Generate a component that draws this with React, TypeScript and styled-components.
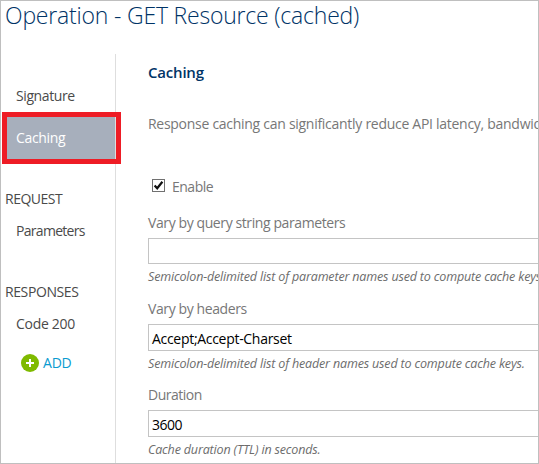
import React from 'react';
import styled, { createGlobalStyle } from 'styled-components';

const GlobalStyle = createGlobalStyle`
  * { box-sizing: border-box; }
  body { margin: 0; background: #fff; font-family: "Open Sans", "Noto Sans", sans-serif; }
`;

const Page = styled.div`
  width: 539px;
  height: 464px;
  border: 1px solid #bfbfbf;
  overflow: hidden;
  display: flex;
  flex-direction: column;
`;

const Title = styled.h1`
  margin: 0;
  height: 53px;
  padding: 0 0 0 4px;
  font-size: 23px;
  font-weight: 300;
  line-height: 28px;
  letter-spacing: -0.2px;
  color: #003366;
  white-space: nowrap;
`;

const Body = styled.div`
  flex: 1;
  display: flex;
  min-height: 0;
`;

const Sidebar = styled.nav`
  flex: none;
  width: 115px;
  border-right: 1px solid #dedede;
  padding-top: 22px;
  font-size: 14px;
  color: #4a4a4a;
`;

const NavItem = styled.div<{ $selected?: boolean; $track?: number }>`
  position: relative;
  height: ${p => (p.$selected ? 42 : 41)}px;
  margin-left: 1px;
  line-height: 20px;
  padding: ${p => (p.$selected ? 11 : 10)}px 0 0 14px;
  letter-spacing: ${p => p.$track ?? 0}px;
  color: ${p => (p.$selected ? '#fff' : 'inherit')};
  background: ${p => (p.$selected ? '#a7afbc' : 'transparent')};
`;

const Highlight = styled.span`
  position: absolute;
  left: 0;
  top: -5px;
  width: 119px;
  height: 52px;
  border: 5px solid #ee1c25;
`;

const NavHeading = styled.div<{ $gap: number; $track?: number }>`
  margin-top: ${p => p.$gap}px;
  height: 22px;
  padding-left: 4px;
  line-height: 20px;
  letter-spacing: ${p => p.$track ?? 0}px;
`;

const AddButton = styled.div`
  display: flex;
  align-items: center;
  gap: 4px;
  height: 20px;
  margin-top: 8px;
  padding-left: 20px;
  line-height: 20px;
  letter-spacing: -0.2px;
  color: #0a9bd0;
  svg { display: block; }
`;

const Content = styled.main`
  flex: 1;
  min-width: 0;
  padding: 8px 0 0 32px;
  overflow: hidden;
  white-space: nowrap;
  font-size: 14px;
  line-height: 20px;
  color: #777;
`;

const Heading = styled.h2`
  margin: 0 0 32px;
  font-size: 15px;
  font-weight: 600;
  line-height: 20px;
  letter-spacing: -0.2px;
  color: #003366;
`;

const Intro = styled.p`
  margin: 0 0 43px;
  letter-spacing: -0.28px;
`;

const CheckRow = styled.div`
  display: flex;
  height: 20px;
  gap: 7px;
  padding-left: 4px;
  margin-bottom: 16px;
  letter-spacing: -0.5px;
  svg { display: block; margin-top: 2px; }
`;

const Field = styled.div<{ $after: number }>`
  margin-bottom: ${p => p.$after}px;
`;

const Label = styled.div<{ $track: number }>`
  height: 20px;
  margin-bottom: 5px;
  letter-spacing: ${p => p.$track}px;
`;

const Input = styled.div<{ $height: number; $track?: number }>`
  height: ${p => p.$height}px;
  border: 1px solid #c4c4c4;
  border-right: 0;
  padding: 4px 0 0 3px;
  letter-spacing: ${p => p.$track ?? 0}px;
  color: #000;
`;

const Hint = styled.div`
  height: 20px;
  margin-top: 3px;
  font-size: 12.5px;
  font-style: italic;
  letter-spacing: -0.16px;
  color: #6c6c6c;
`;

const PlusIcon = () => (
  <svg width="18" height="18" viewBox="0 0 18 18">
    <circle cx="9" cy="9" r="9" fill="#7fba00" />
    <path d="M9 5v8M5 9h8" stroke="#fff" strokeWidth="2" />
  </svg>
);

const CheckIcon = () => (
  <svg width="13" height="13" viewBox="0 0 13 13">
    <rect x=".5" y=".5" width="12" height="12" fill="#fff" stroke="#707070" />
    <path d="M2.6 6.4 5.2 9.2 10.4 2.8" fill="none" stroke="#111" strokeWidth="2.2" />
  </svg>
);

export default function App() {
  return (
    <>
      <GlobalStyle />
      <Page>
        <Title>Operation - GET Resource (cached)</Title>
        <Body>
          <Sidebar>
            <NavItem $track={-0.4}>Signature</NavItem>
            <NavItem $selected $track={-0.35}>
              Caching
              <Highlight />
            </NavItem>
            <NavHeading $gap={30} $track={-0.5}>REQUEST</NavHeading>
            <NavItem $track={-0.7}>Parameters</NavItem>
            <NavHeading $gap={30} $track={-0.4}>RESPONSES</NavHeading>
            <NavItem $track={-0.3}>Code 200</NavItem>
            <AddButton>
              <PlusIcon />
              ADD
            </AddButton>
          </Sidebar>
          <Content>
            <Heading>Caching</Heading>
            <Intro>Response caching can significantly reduce API latency, bandwid</Intro>
            <CheckRow>
              <CheckIcon />
              Enable
            </CheckRow>
            <Field $after={12}>
              <Label $track={-0.4}>Vary by query string parameters</Label>
              <Input $height={26} />
              <Hint>Semicolon-delimited list of parameter names used to compute cache keys</Hint>
            </Field>
            <Field $after={11}>
              <Label $track={-0.4}>Vary by headers</Label>
              <Input $height={27} $track={-0.3}>Accept;Accept-Charset</Input>
              <Hint>Semicolon-delimited list of header names used to compute cache keys.</Hint>
            </Field>
            <Field $after={0}>
              <Label $track={-0.5}>Duration</Label>
              <Input $height={27} $track={-0.5}>3600</Input>
              <Hint>Cache duration (TTL) in seconds.</Hint>
            </Field>
          </Content>
        </Body>
      </Page>
    </>
  );
}
